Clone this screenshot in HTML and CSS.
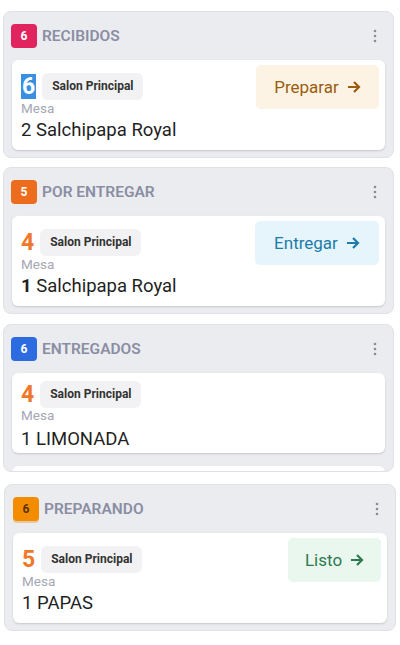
FILE: index.html
```html
<!DOCTYPE html>
<html lang="es">
<head>
    <meta charset="UTF-8">
    <title>Pedidos</title>
    <link rel="stylesheet" href="styles.css">
</head>
<body>

<div class="column">
    <div class="col-head">
        <span class="count count-red">6</span>
        <span class="col-title">RECIBIDOS</span>
        <svg class="kebab" width="4" height="14" viewBox="0 0 4 14"><circle cx="2" cy="2" r="1.3"/><circle cx="2" cy="7" r="1.3"/><circle cx="2" cy="12" r="1.3"/></svg>
    </div>
    <div class="order">
        <div class="order-info">
            <div class="table-row">
                <span class="table-no selected">6</span>
                <span class="room">Salon Principal</span>
            </div>
            <div class="mesa">Mesa</div>
            <div class="item">2 Salchipapa Royal</div>
        </div>
        <button class="action action-prep">Preparar
            <svg width="14" height="12" viewBox="0 0 14 12"><path d="M1 6h11M7 1l5 5-5 5" fill="none" stroke="currentColor" stroke-width="2.2"/></svg>
        </button>
    </div>
</div>

<div class="column column-second">
    <div class="col-head">
        <span class="count count-orange">5</span>
        <span class="col-title">POR ENTREGAR</span>
        <svg class="kebab" width="4" height="14" viewBox="0 0 4 14"><circle cx="2" cy="2" r="1.3"/><circle cx="2" cy="7" r="1.3"/><circle cx="2" cy="12" r="1.3"/></svg>
    </div>
    <div class="order">
        <div class="order-info">
            <div class="table-row">
                <span class="table-no">4</span>
                <span class="room">Salon Principal</span>
            </div>
            <div class="mesa">Mesa</div>
            <div class="item"><b>1</b> Salchipapa Royal</div>
        </div>
        <button class="action action-deliver">Entregar
            <svg width="14" height="12" viewBox="0 0 14 12"><path d="M1 6h11M7 1l5 5-5 5" fill="none" stroke="currentColor" stroke-width="2.2"/></svg>
        </button>
    </div>
</div>

<div class="column column-clip">
    <div class="col-head">
        <span class="count count-blue">6</span>
        <span class="col-title">ENTREGADOS</span>
        <svg class="kebab" width="4" height="14" viewBox="0 0 4 14"><circle cx="2" cy="2" r="1.3"/><circle cx="2" cy="7" r="1.3"/><circle cx="2" cy="12" r="1.3"/></svg>
    </div>
    <div class="order order-done">
        <div class="order-info">
            <div class="table-row">
                <span class="table-no">4</span>
                <span class="room">Salon Principal</span>
            </div>
            <div class="mesa">Mesa</div>
            <div class="item">1 LIMONADA</div>
        </div>
    </div>
    <div class="order order-done"></div>
</div>

<div class="column column-last">
    <div class="col-head">
        <span class="count count-amber">6</span>
        <span class="col-title">PREPARANDO</span>
        <svg class="kebab" width="4" height="14" viewBox="0 0 4 14"><circle cx="2" cy="2" r="1.3"/><circle cx="2" cy="7" r="1.3"/><circle cx="2" cy="12" r="1.3"/></svg>
    </div>
    <div class="order">
        <div class="order-info">
            <div class="table-row">
                <span class="table-no">5</span>
                <span class="room">Salon Principal</span>
            </div>
            <div class="mesa">Mesa</div>
            <div class="item">1 PAPAS</div>
        </div>
        <button class="action action-ready">Listo
            <svg width="14" height="12" viewBox="0 0 14 12"><path d="M1 6h11M7 1l5 5-5 5" fill="none" stroke="currentColor" stroke-width="2.2"/></svg>
        </button>
    </div>
</div>

</body>
</html>
```

FILE: styles.css
```css
body {
    margin: 0;
    padding-top: 11px;
    background: #ffffff;
    font-family: Roboto, "Liberation Sans", sans-serif;
    color: #222;
}

.column {
    margin: 0 6px 9px 3px;
    background: #ebecf0;
    border: 1px solid #e0e1e6;
    border-radius: 8px;
    padding-bottom: 7px;
}
.column-second {
    margin-bottom: 10px;
}
.column-clip {
    height: 139px;
    overflow: hidden;
    margin-bottom: 12px;
}
.column-last {
    margin-left: 4px;
    margin-right: 4px;
}

.col-head {
    height: 48px;
    display: flex;
    align-items: center;
}
.count {
    width: 26px;
    height: 24px;
    margin-left: 7px;
    border-radius: 4px;
    color: #fff;
    font-size: 12px;
    font-weight: bold;
    display: flex;
    align-items: center;
    justify-content: center;
}
.count-red { background: #e1245e; }
.count-orange { background: #ee6c1e; }
.count-blue { background: #2d6be0; }
.count-amber {
    background: #f38c00;
    color: #5a3300;
    box-shadow: 0 2px 0 #e8c79a;
    margin-left: 8px;
}
.col-title {
    margin-left: 5px;
    font-size: 15.5px;
    font-weight: 600;
    color: #8a8ea3;
}
.kebab {
    margin-left: auto;
    margin-right: 16px;
    fill: #8b8b90;
}

.order {
    margin: 0 8px;
    background: #fff;
    border-radius: 6px;
    box-shadow: 0 1px 2px rgba(0, 0, 0, 0.16);
    display: flex;
    justify-content: space-between;
    min-height: 90px;
}
.order-done {
    min-height: 80px;
    margin-bottom: 13px;
}
.order-info {
    padding: 13px 0 0 9px;
}
.order-done .order-info {
    padding-top: 8px;
}
.table-row {
    display: flex;
    align-items: center;
}
.table-no {
    font-size: 23px;
    font-weight: bold;
    color: #f0782a;
    line-height: 25px;
}
.selected {
    background: #3a8fe3;
    color: #fff;
    padding: 0 1px;
}
.room {
    margin-left: 6px;
    background: #f2f2f4;
    border-radius: 6px;
    padding: 0 10px;
    height: 27px;
    line-height: 27px;
    font-size: 12px;
    font-weight: bold;
    color: #333;
}
.mesa {
    font-size: 13.5px;
    color: #a4a7b4;
    line-height: 16px;
}
.order-done .mesa {
    margin-top: -1px;
}
.item {
    margin-top: 2px;
    font-size: 18.5px;
    line-height: 24px;
    color: #1f1f1f;
}
.order-done .item {
    margin-top: 4px;
}

.action {
    margin: 5px 6px 0 0;
    height: 44px;
    border: none;
    border-radius: 5px;
    font-family: Roboto, "Liberation Sans", sans-serif;
    font-size: 17px;
    display: flex;
    align-items: center;
    justify-content: center;
    gap: 8px;
}
.action-prep {
    width: 123px;
    background: #fdf3e5;
    color: #9a5d0c;
}
.action-deliver {
    width: 124px;
    background: #e6f5fc;
    color: #1e7ca8;
}
.action-ready {
    width: 93px;
    background: #e9f7ef;
    color: #2e7a50;
}
```
